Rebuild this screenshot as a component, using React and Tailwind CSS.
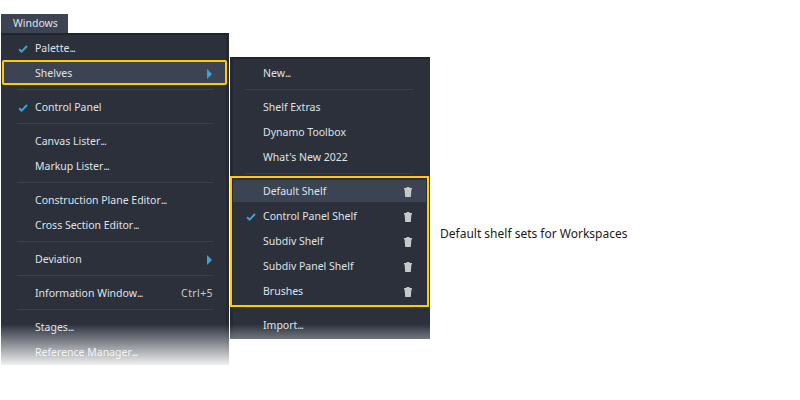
import React from 'react';

const FONT = "font-['Noto_Sans','Open_Sans',sans-serif]";

const windowsMenu = [
  [{ label: 'Palette', dots: true, checked: true }, { label: 'Shelves', arrow: true, active: true }],
  [{ label: 'Control Panel', checked: true }],
  [{ label: 'Canvas Lister', dots: true }, { label: 'Markup Lister', dots: true }],
  [{ label: 'Construction Plane Editor', dots: true }, { label: 'Cross Section Editor', dots: true }],
  [{ label: 'Deviation', arrow: true }],
  [{ label: 'Information Window', dots: true, shortcut: 'Ctrl+5' }],
  [{ label: 'Stages', dots: true }, { label: 'Reference Manager', dots: true }],
];

const shelfMenu = [
  [{ label: 'New', dots: true }],
  [{ label: 'Shelf Extras' }, { label: 'Dynamo Toolbox' }, { label: "What's New 2022" }],
  [
    { label: 'Default Shelf', trash: true, hover: true },
    { label: 'Control Panel Shelf', trash: true, checked: true },
    { label: 'Subdiv Shelf', trash: true },
    { label: 'Subdiv Panel Shelf', trash: true },
    { label: 'Brushes', trash: true },
  ],
  [{ label: 'Import', dots: true }],
];

function Check() {
  return (
    <svg width="10" height="8" viewBox="0 0 10 8" className="block">
      <path d="M1 4.2 L3.6 6.6 L9 1" fill="none" stroke="#3aa3d8" strokeWidth="2" />
    </svg>
  );
}

function Trash() {
  return (
    <svg width="8" height="10" viewBox="0 0 8 10" className="block mr-px">
      <path d="M2.5 0 H5.5 V1 H8 V2.4 H7.4 L6.8 10 H1.2 L0.6 2.4 H0 V1 H2.5 Z" fill="#c6c8cc" />
    </svg>
  );
}

function Row({ item, inset }) {
  let state = '';
  if (item.active) {
    state = '-mt-px mb-px pt-[2px] ml-px -mr-px bg-[#3c4454] outline-2 -outline-offset-2 outline-[#ffcc00] rounded-[2px]';
  }
  if (item.hover) {
    state = 'pt-px bg-[#3c4454] bg-clip-padding border-t border-b-2 border-transparent';
  }
  return (
    <div className={`h-[25px] flex items-center text-[10.5px] text-[#dfe3e8] ${inset} pr-[13px] ${state}`}>
      <span className={`shrink-0 ${item.active ? 'w-[16px]' : 'w-[17px]'}`}>{item.checked && <Check />}</span>
      <span className="flex-1 whitespace-nowrap">
        {item.label}
        {item.dots && <span className="tracking-[-1px]">...</span>}
      </span>
      {item.shortcut && <span className="text-[#c9ced6] tracking-[0.4px]">{item.shortcut}</span>}
      {item.arrow && (
        <span className={`w-0 h-0 border-y-[5px] border-y-transparent border-l-[5px] border-l-[#3aa3d8] ${item.active ? 'mr-[2px]' : 'mr-[1px]'}`} />
      )}
      {item.trash && <Trash />}
    </div>
  );
}

function Menu({ groups, inset, sepInset, boxedGroup, className }) {
  return (
    <div className={`bg-[#2b303b] border-t-2 border-t-[#20242c] ${className}`}>
      {groups.map((group, i) => (
        <div key={i}>
          {i > 0 && (
            <div className={`h-[9px] pt-[3px] ${sepInset}`}>
              <div className="h-px bg-[#3a404c]" />
            </div>
          )}
          <div className={i === boxedGroup ? 'mr-[4px] outline-2 outline-offset-1 outline-[#ffcc00]' : ''}>
            {group.map((item) => (
              <Row key={item.label} item={item} inset={inset} />
            ))}
          </div>
        </div>
      ))}
    </div>
  );
}

export default function App() {
  return (
    <div className={`relative w-[800px] h-[400px] overflow-hidden bg-white ${FONT}`}>
      <div className="flex pl-px pt-[14px]">
        <div className="w-[228px] shrink-0">
          <div className="w-[67px] h-[19px] bg-[#3c4454] text-[10.5px] text-[#dfe3e8] pl-[12px] leading-[18px]">Windows</div>
          <Menu
            groups={windowsMenu}
            inset="pl-[17px]"
            sepInset="pl-[16px] pr-[13px]"
            className="pt-[1px] border-r-[3px] border-r-[#252932]"
          />
        </div>
        <div className="w-[200px] shrink-0 ml-px mt-[43px]">
          <Menu
            groups={shelfMenu}
            inset="pl-[13px]"
            sepInset="pl-[12px] pr-[17px]"
            boxedGroup={2}
            className="pt-[2px] pb-[1px] border-l-[3px] border-l-[#252932]"
          />
        </div>
        <p className="ml-[10px] mt-[211px] text-[12px] text-[#1a1a1a] whitespace-nowrap">Default shelf sets for Workspaces</p>
      </div>

      {/* the fade lies over the bottom of both menus */}
      <div className="absolute left-0 top-[324px] w-[440px] h-[44px] bg-gradient-to-b from-transparent to-white" />
    </div>
  );
}
